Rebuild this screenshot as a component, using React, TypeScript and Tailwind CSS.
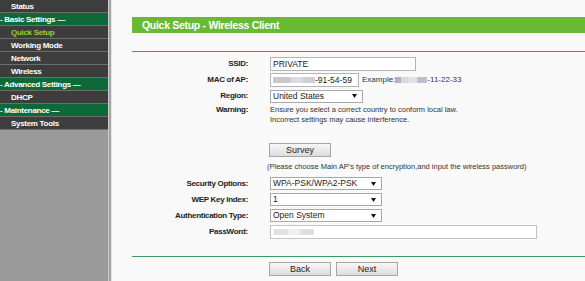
import type { ReactNode } from 'react';

const menu = [
  { label: 'Status', kind: 'item' },
  { label: '- Basic Settings —', kind: 'head' },
  { label: 'Quick Setup', kind: 'active' },
  { label: 'Working Mode', kind: 'item' },
  { label: 'Network', kind: 'item' },
  { label: 'Wireless', kind: 'item' },
  { label: '- Advanced Settings —', kind: 'head' },
  { label: 'DHCP', kind: 'item' },
  { label: '- Maintenance —', kind: 'head' },
  { label: 'System Tools', kind: 'item' },
];

function Sidebar() {
  return (
    <aside className="w-[108px] shrink-0 bg-[#9a9a9a] flex flex-col">
      {menu.map((m) => (
        <div
          key={m.label}
          className={`h-[13px] border-b border-[#6e6e6e] text-[8px] font-bold tracking-[-0.3px] leading-[13px] whitespace-nowrap ${
            m.kind === 'head' ? 'bg-[#0c6a38] pl-0' : 'bg-[#3d3d3d] pl-[11px]'
          } ${m.kind === 'active' ? 'text-[#99cc33]' : 'text-white'}`}
        >
          {m.label}
        </div>
      ))}
    </aside>
  );
}

function Row({ label, children, h = 'h-[14px]' }: { label: string; children: ReactNode; h?: string }) {
  return (
    <div className={`flex items-center gap-[22px] ${h}`}>
      <div className="w-[116px] shrink-0 text-right text-[8px] font-bold tracking-[-0.3px] text-[#222]">{label}</div>
      {children}
    </div>
  );
}

function Select({ value, w }: { value: string; w: string }) {
  return (
    <div className={`${w} h-[13px] border border-[#a9a9a9] bg-white flex items-center justify-between pl-[2px] pr-[5px] text-[8.5px] text-[#222]`}>
      <span>{value}</span>
      <svg width="5" height="4" viewBox="0 0 5 4">
        <path d="M0 0H5L2.5 4Z" fill="#111" />
      </svg>
    </div>
  );
}

function Blur({ w, c }: { w: string; c: string }) {
  return <span className={`inline-block h-[6px] ${w} ${c}`} />;
}

function Btn({ children }: { children: ReactNode }) {
  return (
    <button className="w-[62px] h-[14px] border border-[#a6a6a6] bg-gradient-to-b from-[#f7f7f7] to-[#dddddd] text-[9px] leading-[12px] text-[#222]">
      {children}
    </button>
  );
}

export default function App() {
  return (
    <div className="flex w-[585px] h-[281px] overflow-hidden bg-[#f9f9f9] font-['Liberation_Sans',Arial,sans-serif]">
      <Sidebar />
      <div className="w-[4px] shrink-0 flex">
        <div className="w-px bg-[#cfcfcf]" />
        <div className="w-[2px] bg-[#a3a3a3]" />
        <div className="w-px bg-[#e6e6e6]" />
      </div>

      <main className="flex-1 pl-[20px] pt-[17px] min-w-0">
        <div className="h-[16px] bg-[#6ab934] pl-[10px] text-[10.5px] font-bold tracking-[-0.3px] leading-[16px] text-white whitespace-nowrap">
          Quick Setup - Wireless Client
        </div>
        <div className="mt-[18px] h-px bg-[#3d9963]" />

        <div className="mt-[5px] flex flex-col gap-[2px]">
          <Row label="SSID:">
            <div className="w-[146px] h-[14px] border border-[#b4b4b4] bg-white pl-[2px] text-[8.5px] leading-[12px] text-[#222]">PRIVATE</div>
          </Row>
          <Row label="MAC of AP:">
            <div className="w-[89px] h-[14px] border border-[#b4b4b4] bg-white pl-[2px] flex items-center text-[8.5px] text-[#222]">
              <Blur w="w-[18px]" c="bg-[#c9c9cc]" />
              <Blur w="w-[12px]" c="bg-[#dcdce0]" />
              <Blur w="w-[12px]" c="bg-[#cfcfd3]" />
              <span>-91-54-59</span>
            </div>
            <div className="-ml-[19px] flex items-center text-[8px] text-[#333]">
              <span>Example:</span>
              <Blur w="w-[6px]" c="bg-[#b9aec4]" />
              <Blur w="w-[8px]" c="bg-[#ddd6e2]" />
              <Blur w="w-[8px]" c="bg-[#e4e4e8]" />
              <Blur w="w-[10px]" c="bg-[#c6bccf]" />
              <span className="text-[#3b2e5e]">-11-22-33</span>
            </div>
          </Row>
          <Row label="Region:">
            <Select value="United States" w="w-[93px]" />
          </Row>
          <div className="flex gap-[22px]">
            <div className="w-[116px] shrink-0 text-right text-[8px] font-bold tracking-[-0.3px] leading-[10px] text-[#222]">Warning:</div>
            <div className="text-[7.5px] leading-[10px] text-[#333]">
              Ensure you select a correct country to conform local law.
              <br />
              Incorrect settings may cause interference.
            </div>
          </div>
        </div>

        <div className="mt-[18px] pl-[137px] flex">
          <Btn>Survey</Btn>
        </div>
        <div className="mt-[5px] pl-[135px] text-[7.5px] leading-[10px] text-[#333] whitespace-nowrap">
          (Please choose Main AP's type of encryption,and input the wireless password)
        </div>

        <div className="mt-[5px] flex flex-col gap-[3px]">
          <Row label="Security Options:" h="h-[13px]">
            <Select value="WPA-PSK/WPA2-PSK" w="w-[112px]" />
          </Row>
          <Row label="WEP Key Index:" h="h-[13px]">
            <Select value="1" w="w-[112px]" />
          </Row>
          <Row label="Authentication Type:" h="h-[13px]">
            <Select value="Open System" w="w-[112px]" />
          </Row>
          <Row label="PassWord:">
            <div className="w-[267px] h-[14px] border border-[#c4c4c4] bg-white pl-[3px] flex items-center">
              <Blur w="w-[14px]" c="bg-[#e2dfe5]" />
              <Blur w="w-[12px]" c="bg-[#f1eff3]" />
              <Blur w="w-[14px]" c="bg-[#e0dce4]" />
            </div>
          </Row>
        </div>

        <div className="mt-[17px] h-px bg-[#3d9963]" />
        <div className="mt-[5px] pl-[137px] flex gap-[5px]">
          <Btn>Back</Btn>
          <Btn>Next</Btn>
        </div>
      </main>
    </div>
  );
}
